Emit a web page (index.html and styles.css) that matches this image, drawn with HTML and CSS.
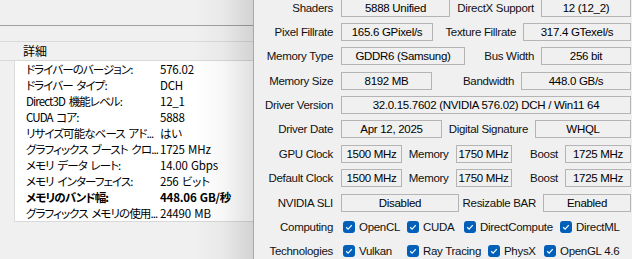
FILE: index.html
```html
<!DOCTYPE html>
<html lang="ja">
<head>
    <meta charset="UTF-8">
    <meta name="viewport" content="width=device-width, initial-scale=1.0">
    <title>システム情報 / GPU-Z</title>
    <link rel="stylesheet" href="styles.css">
</head>
<body>
    <div class="desktop">
        <!-- NVIDIA システム情報 -->
        <section class="sysinfo">
            <div class="toolbar"></div>
            <div class="tabs"></div>
            <div class="list-head">詳細</div>
            <div class="list">
                <div class="item"><span class="key">ドライバーのバージョン:</span><span class="val">576.02</span></div>
                <div class="item"><span class="key">ドライバー タイプ:</span><span class="val">DCH</span></div>
                <div class="item"><span class="key">Direct3D 機能レベル:</span><span class="val">12_1</span></div>
                <div class="item"><span class="key">CUDA コア:</span><span class="val">5888</span></div>
                <div class="item"><span class="key">リサイズ可能なベース アド...</span><span class="val">はい</span></div>
                <div class="item"><span class="key">グラフィックス ブースト クロ...</span><span class="val">1725 MHz</span></div>
                <div class="item"><span class="key">メモリ データ レート:</span><span class="val">14.00 Gbps</span></div>
                <div class="item"><span class="key">メモリ インターフェイス:</span><span class="val">256 ビット</span></div>
                <div class="item bold"><span class="key">メモリのバンド幅:</span><span class="val">448.06 GB/秒</span></div>
                <div class="item"><span class="key">グラフィックス メモリの使用...</span><span class="val">24490 MB</span></div>
            </div>
        </section>

        <!-- GPU-Z -->
        <section class="gpuz">
            <div class="specs">
                <div class="row">
                    <span class="label">Shaders</span>
                    <span class="field w109">5888 Unified</span>
                    <span class="sub">DirectX Support</span>
                    <span class="field w90">12 (12_2)</span>
                </div>
                <div class="row">
                    <span class="label">Pixel Fillrate</span>
                    <span class="field w92">165.6 GPixel/s</span>
                    <span class="sub">Texture Fillrate</span>
                    <span class="field w108">317.4 GTexel/s</span>
                </div>
                <div class="row">
                    <span class="label">Memory Type</span>
                    <span class="field w124">GDDR6 (Samsung)</span>
                    <span class="sub">Bus Width</span>
                    <span class="field w90">256 bit</span>
                </div>
                <div class="row">
                    <span class="label">Memory Size</span>
                    <span class="field w91">8192 MB</span>
                    <span class="sub">Bandwidth</span>
                    <span class="field w110">448.0 GB/s</span>
                </div>
                <div class="row">
                    <span class="label">Driver Version</span>
                    <span class="field grow">32.0.15.7602 (NVIDIA 576.02) DCH / Win11 64</span>
                </div>
                <div class="row">
                    <span class="label">Driver Date</span>
                    <span class="field w101">Apr 12, 2025</span>
                    <span class="sub">Digital Signature</span>
                    <span class="field w96">WHQL</span>
                </div>
                <div class="row">
                    <span class="label">GPU Clock</span>
                    <span class="field w61">1500 MHz</span>
                    <span class="sub">Memory</span>
                    <span class="field w56">1750 MHz</span>
                    <span class="sub">Boost</span>
                    <span class="field w66">1725 MHz</span>
                </div>
                <div class="row">
                    <span class="label">Default Clock</span>
                    <span class="field w61">1500 MHz</span>
                    <span class="sub">Memory</span>
                    <span class="field w56">1750 MHz</span>
                    <span class="sub">Boost</span>
                    <span class="field w66">1725 MHz</span>
                </div>
                <div class="row">
                    <span class="label">NVIDIA SLI</span>
                    <span class="field w118">Disabled</span>
                    <span class="sub">Resizable BAR</span>
                    <span class="field w88">Enabled</span>
                </div>
                <div class="row">
                    <span class="label">Computing</span>
                    <span class="checks">
                        <span class="opt w64"><span class="box"><svg viewBox="0 0 12 12"><path d="M3.2 6.3 5.1 8.1 8.8 4.2"/></svg></span>OpenCL</span>
                        <span class="opt w57"><span class="box"><svg viewBox="0 0 12 12"><path d="M3.2 6.3 5.1 8.1 8.8 4.2"/></svg></span>CUDA</span>
                        <span class="opt w96"><span class="box"><svg viewBox="0 0 12 12"><path d="M3.2 6.3 5.1 8.1 8.8 4.2"/></svg></span>DirectCompute</span>
                        <span class="opt"><span class="box"><svg viewBox="0 0 12 12"><path d="M3.2 6.3 5.1 8.1 8.8 4.2"/></svg></span>DirectML</span>
                    </span>
                </div>
                <div class="row">
                    <span class="label">Technologies</span>
                    <span class="checks">
                        <span class="opt w64"><span class="box"><svg viewBox="0 0 12 12"><path d="M3.2 6.3 5.1 8.1 8.8 4.2"/></svg></span>Vulkan</span>
                        <span class="opt w81"><span class="box"><svg viewBox="0 0 12 12"><path d="M3.2 6.3 5.1 8.1 8.8 4.2"/></svg></span>Ray Tracing</span>
                        <span class="opt w56"><span class="box"><svg viewBox="0 0 12 12"><path d="M3.2 6.3 5.1 8.1 8.8 4.2"/></svg></span>PhysX</span>
                        <span class="opt"><span class="box"><svg viewBox="0 0 12 12"><path d="M3.2 6.3 5.1 8.1 8.8 4.2"/></svg></span>OpenGL 4.6</span>
                    </span>
                </div>
            </div>
        </section>
    </div>
</body>
</html>
```

FILE: styles.css
```css
* {
    margin: 0;
    padding: 0;
    box-sizing: border-box;
}

body {
    background: #f0f0f0;
    overflow: hidden;
}

.desktop {
    display: flex;
    width: 632px;
    height: 259px;
    overflow: hidden;
}

/* Левое окно: системная информация */
.sysinfo {
    width: 253px;
    flex: none;
    background: #f0f0f0;
    font-family: "Noto Sans CJK JP", sans-serif;
    font-feature-settings: "palt";
    font-size: 12px;
    color: #000;
}

.toolbar {
    height: 26px;
    border-bottom: 1px solid #a0a0a0;
}

.tabs {
    height: 16px;
    border-bottom: 1px solid #d9d9d9;
}

.list-head {
    height: 19px;
    line-height: 18px;
    padding-left: 23px;
    border-bottom: 1px solid #d9d9d9;
}

.list {
    margin-left: 14px;
    background: #fff;
    border-left: 1px solid #dcdcdc;
    border-bottom: 1px solid #d9d9d9;
}

.item {
    display: flex;
    height: 16px;
    line-height: 16px;
    padding-left: 11px;
    white-space: nowrap;
    font-size: 11.5px;
}

.item .key {
    width: 134px;
    flex: none;
    overflow: hidden;
    letter-spacing: -0.9px;
    word-spacing: 2px;
}

.item .val {
    letter-spacing: -0.2px;
    word-spacing: 1px;
}

.item.bold {
    font-weight: 700;
}

/* GPU-Z */
.gpuz {
    flex: 1;
    position: relative;
    background: #f0f0f0;
    border-left: 1px solid #a8a8a8;
    padding-right: 1px;
    font-family: "Liberation Sans", Arial, sans-serif;
    font-size: 11.5px;
    letter-spacing: -0.3px;
    color: #111;
}

/* тень окна поверх левого окна */
.gpuz::before {
    content: '';
    position: absolute;
    top: 0;
    bottom: 0;
    left: -61px;
    width: 60px;
    background: linear-gradient(to right, rgba(0, 0, 0, 0), rgba(0, 0, 0, 0.03) 50%, rgba(0, 0, 0, 0.12));
    pointer-events: none;
}

.specs {
    display: grid;
    grid-auto-rows: 18px;
    row-gap: 6.4px;
    margin-top: -1.5px;
}

.row {
    display: flex;
    align-items: center;
    white-space: nowrap;
}

.label {
    width: 79px;
    flex: none;
    margin-right: 8px;
    text-align: right;
}

.sub {
    flex: 1;
    text-align: right;
    padding-right: 7px;
}

.field {
    flex: none;
    height: 18px;
    line-height: 16px;
    border: 1px solid #b4b4b4;
    background: #f0f0f0;
    text-align: center;
    color: #000;
    overflow: hidden;
}

.field.grow {
    flex: 1;
}

.w56 { width: 56px; }
.w57 { width: 57px; }
.w61 { width: 61px; }
.w64 { width: 64px; }
.w66 { width: 66px; }
.w81 { width: 81px; }
.w88 { width: 88px; }
.w90 { width: 90px; }
.w91 { width: 91px; }
.w92 { width: 92px; }
.w96 { width: 96px; }
.w101 { width: 101px; }
.w108 { width: 108px; }
.w109 { width: 109px; }
.w110 { width: 110px; }
.w118 { width: 118px; }
.w124 { width: 124px; }

.checks {
    display: flex;
    margin-left: 2px;
}

.opt {
    display: flex;
    align-items: center;
    flex: none;
}

.box {
    width: 12px;
    height: 12px;
    margin-right: 4px;
    border-radius: 3px;
    background: #005fb8;
    display: flex;
}

.box svg {
    width: 12px;
    height: 12px;
    fill: none;
    stroke: #fff;
    stroke-width: 1.2;
}
```
